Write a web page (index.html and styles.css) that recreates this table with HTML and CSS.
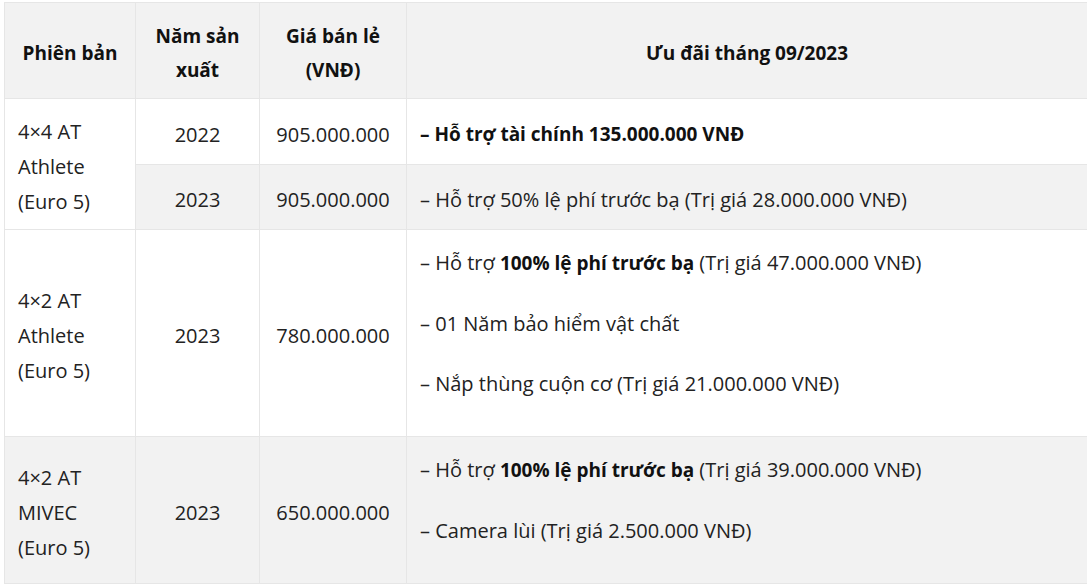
FILE: index.html
```html
<!DOCTYPE html>
<html lang="vi">
<head>
<meta charset="utf-8">
<title>Bảng giá</title>
<link rel="stylesheet" href="styles.css">
</head>
<body>
<table class="price-table">
  <colgroup>
    <col class="c-version">
    <col class="c-year">
    <col class="c-price">
    <col class="c-offer">
  </colgroup>
  <thead>
    <tr>
      <th>Phiên bản</th>
      <th>Năm sản xuất</th>
      <th>Giá bán lẻ (VNĐ)</th>
      <th>Ưu đãi tháng 09/2023</th>
    </tr>
  </thead>
  <tbody>
    <tr>
      <td class="version" rowspan="2">4×4 AT Athlete (Euro 5)</td>
      <td class="center">2022</td>
      <td class="center">905.000.000</td>
      <td class="offer"><p><strong>– Hỗ trợ tài chính 135.000.000 VNĐ</strong></p></td>
    </tr>
    <tr>
      <td class="center">2023</td>
      <td class="center">905.000.000</td>
      <td class="offer"><p>– Hỗ trợ 50% lệ phí trước bạ (Trị giá 28.000.000 VNĐ)</p></td>
    </tr>
    <tr>
      <td class="version">4×2 AT Athlete (Euro 5)</td>
      <td class="center">2023</td>
      <td class="center">780.000.000</td>
      <td class="offer">
        <p>– Hỗ trợ <strong>100% lệ phí trước bạ</strong> (Trị giá 47.000.000 VNĐ)</p>
        <p>– 01 Năm bảo hiểm vật chất</p>
        <p>– Nắp thùng cuộn cơ (Trị giá 21.000.000 VNĐ)</p>
      </td>
    </tr>
    <tr>
      <td class="version">4×2 AT MIVEC (Euro 5)</td>
      <td class="center">2023</td>
      <td class="center">650.000.000</td>
      <td class="offer">
        <p>– Hỗ trợ <strong>100% lệ phí trước bạ</strong> (Trị giá 39.000.000 VNĐ)</p>
        <p>– Camera lùi (Trị giá 2.500.000 VNĐ)</p>
      </td>
    </tr>
  </tbody>
</table>
</body>
</html>
```
FILE: styles.css
```css
html, body {
  margin: 0;
  overflow: hidden;
  background: #ffffff;
}

body {
  padding: 2px 0 0 4px;
  font-family: "Open Sans", "Noto Sans", sans-serif;
  color: #222222;
}

.price-table {
  width: 1084px;
  table-layout: fixed;
  border-collapse: collapse;
  font-size: 20px;
  line-height: 35px;
}

.c-version { width: 131px; }
.c-year { width: 124px; }
.c-price { width: 147px; }

.price-table th,
.price-table td {
  border: 1px solid #e6e6e6;
  vertical-align: middle;
}

.price-table th {
  background: #f2f2f2;
  color: #111111;
  font-size: 19px;
  font-weight: 700;
  line-height: 34px;
  text-align: center;
  padding: 16px 13px 11px;
}

.price-table td {
  padding: 15px 13px 10px;
}

.price-table tbody tr:nth-child(even) {
  background: #f2f2f2;
}

.center {
  text-align: center;
}

.version,
.offer {
  text-align: left;
}

.offer p {
  margin: 0 0 25px;
}

.offer p:only-child {
  margin-bottom: 0;
}

.offer strong {
  font-size: 19px;
  font-weight: 700;
  color: #111111;
}
```
